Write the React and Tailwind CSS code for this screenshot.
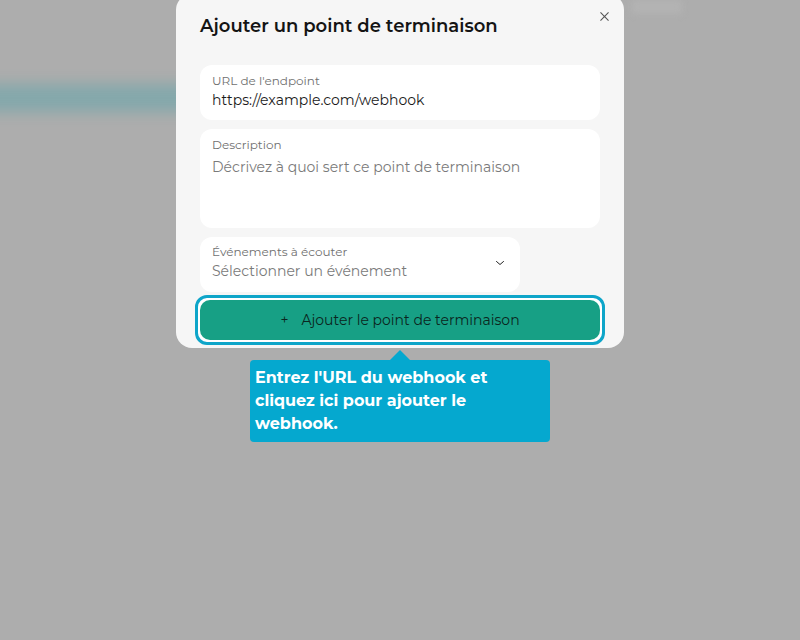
import React from "react";

const ChevronDown = () => (
  <svg width="12" height="12" viewBox="0 0 24 24" fill="none" stroke="#222" strokeWidth="2" strokeLinecap="round" strokeLinejoin="round">
    <path d="M5 9l7 6 7-6" />
  </svg>
);

const CloseIcon = () => (
  <svg width="13" height="13" viewBox="0 0 24 24" fill="none" stroke="#555" strokeWidth="2" strokeLinecap="round">
    <path d="M5 5l14 14M19 5L5 19" />
  </svg>
);

const App = () => {
  return (
    <div
      className="relative h-[640px] w-full overflow-hidden bg-[#adadad]"
      style={{ fontFamily: '"Montserrat", "Noto Sans", sans-serif' }}
    >
      {/* blurred page content behind the overlay */}
      <div className="absolute -left-4 top-[84px] h-[28px] w-[440px] bg-[#84a8ab] blur-[7px]" />
      <div className="absolute left-[632px] top-0 h-[14px] w-[50px] bg-[#b3b3b3] blur-[3px]" />

      <div className="relative flex flex-col items-center">
        <div className="-mt-[6px] w-[448px] rounded-2xl bg-[#f6f6f6] px-6 pb-[3px] pt-[18px]">
          <div className="flex items-start justify-between">
            <h2 className="pt-[1px] text-[18px] font-semibold leading-[26px] text-[#141414]">
              Ajouter un point de terminaison
            </h2>
            <button className="-mr-[11px] mt-[-2px]">
              <CloseIcon />
            </button>
          </div>

          <div className="mt-[26px] flex flex-col gap-[9px]">
            <div className="flex h-[55px] flex-col justify-center rounded-xl bg-white px-3 pb-[2px]">
              <span className="text-[12px] leading-[16px] text-[#707070]">URL de l'endpoint</span>
              <span className="text-[14px] leading-[22px] text-[#1a1a1a]">https://example.com/webhook</span>
            </div>

            <div className="flex h-[99px] flex-col rounded-xl bg-white px-3 pt-[8px]">
              <span className="text-[12px] leading-[16px] text-[#707070]">Description</span>
              <span className="mt-[3px] text-[14px] leading-[22px] text-[#7a7a7a]">
                Décrivez à quoi sert ce point de terminaison
              </span>
            </div>

            <div className="flex h-[55px] w-[320px] items-center justify-between rounded-xl bg-white pb-[3px] pl-3 pr-[14px]">
              <div className="flex flex-col">
                <span className="text-[12px] leading-[16px] text-[#707070]">Événements à écouter</span>
                <span className="text-[14px] leading-[22px] text-[#7a7a7a]">Sélectionner un événement</span>
              </div>
              <ChevronDown />
            </div>

            <div className="-mx-[5px] -mt-[6px] rounded-[12px] border-[3px] border-[#0ea5c9] bg-white p-[2px]">
              <button className="flex h-[40px] w-full items-center justify-center gap-[13px] rounded-[10px] bg-[#17a085] text-[14px] text-[#0b2620]">
                <span className="text-[14px]">+</span>
                <span>Ajouter le point de terminaison</span>
              </button>
            </div>
          </div>
        </div>

        <div className="mt-[2px] h-0 w-0 border-x-[10px] border-b-[10px] border-x-transparent border-b-[#05a8cf]" />
        <div className="w-[300px] rounded-[4px] bg-[#05a8cf] px-[5px] pb-[7px] pt-[6px] text-[16px] font-bold leading-[23px] text-white">
          Entrez l'URL du webhook et cliquez ici pour ajouter le webhook.
        </div>
      </div>
    </div>
  );
};

export default App;
